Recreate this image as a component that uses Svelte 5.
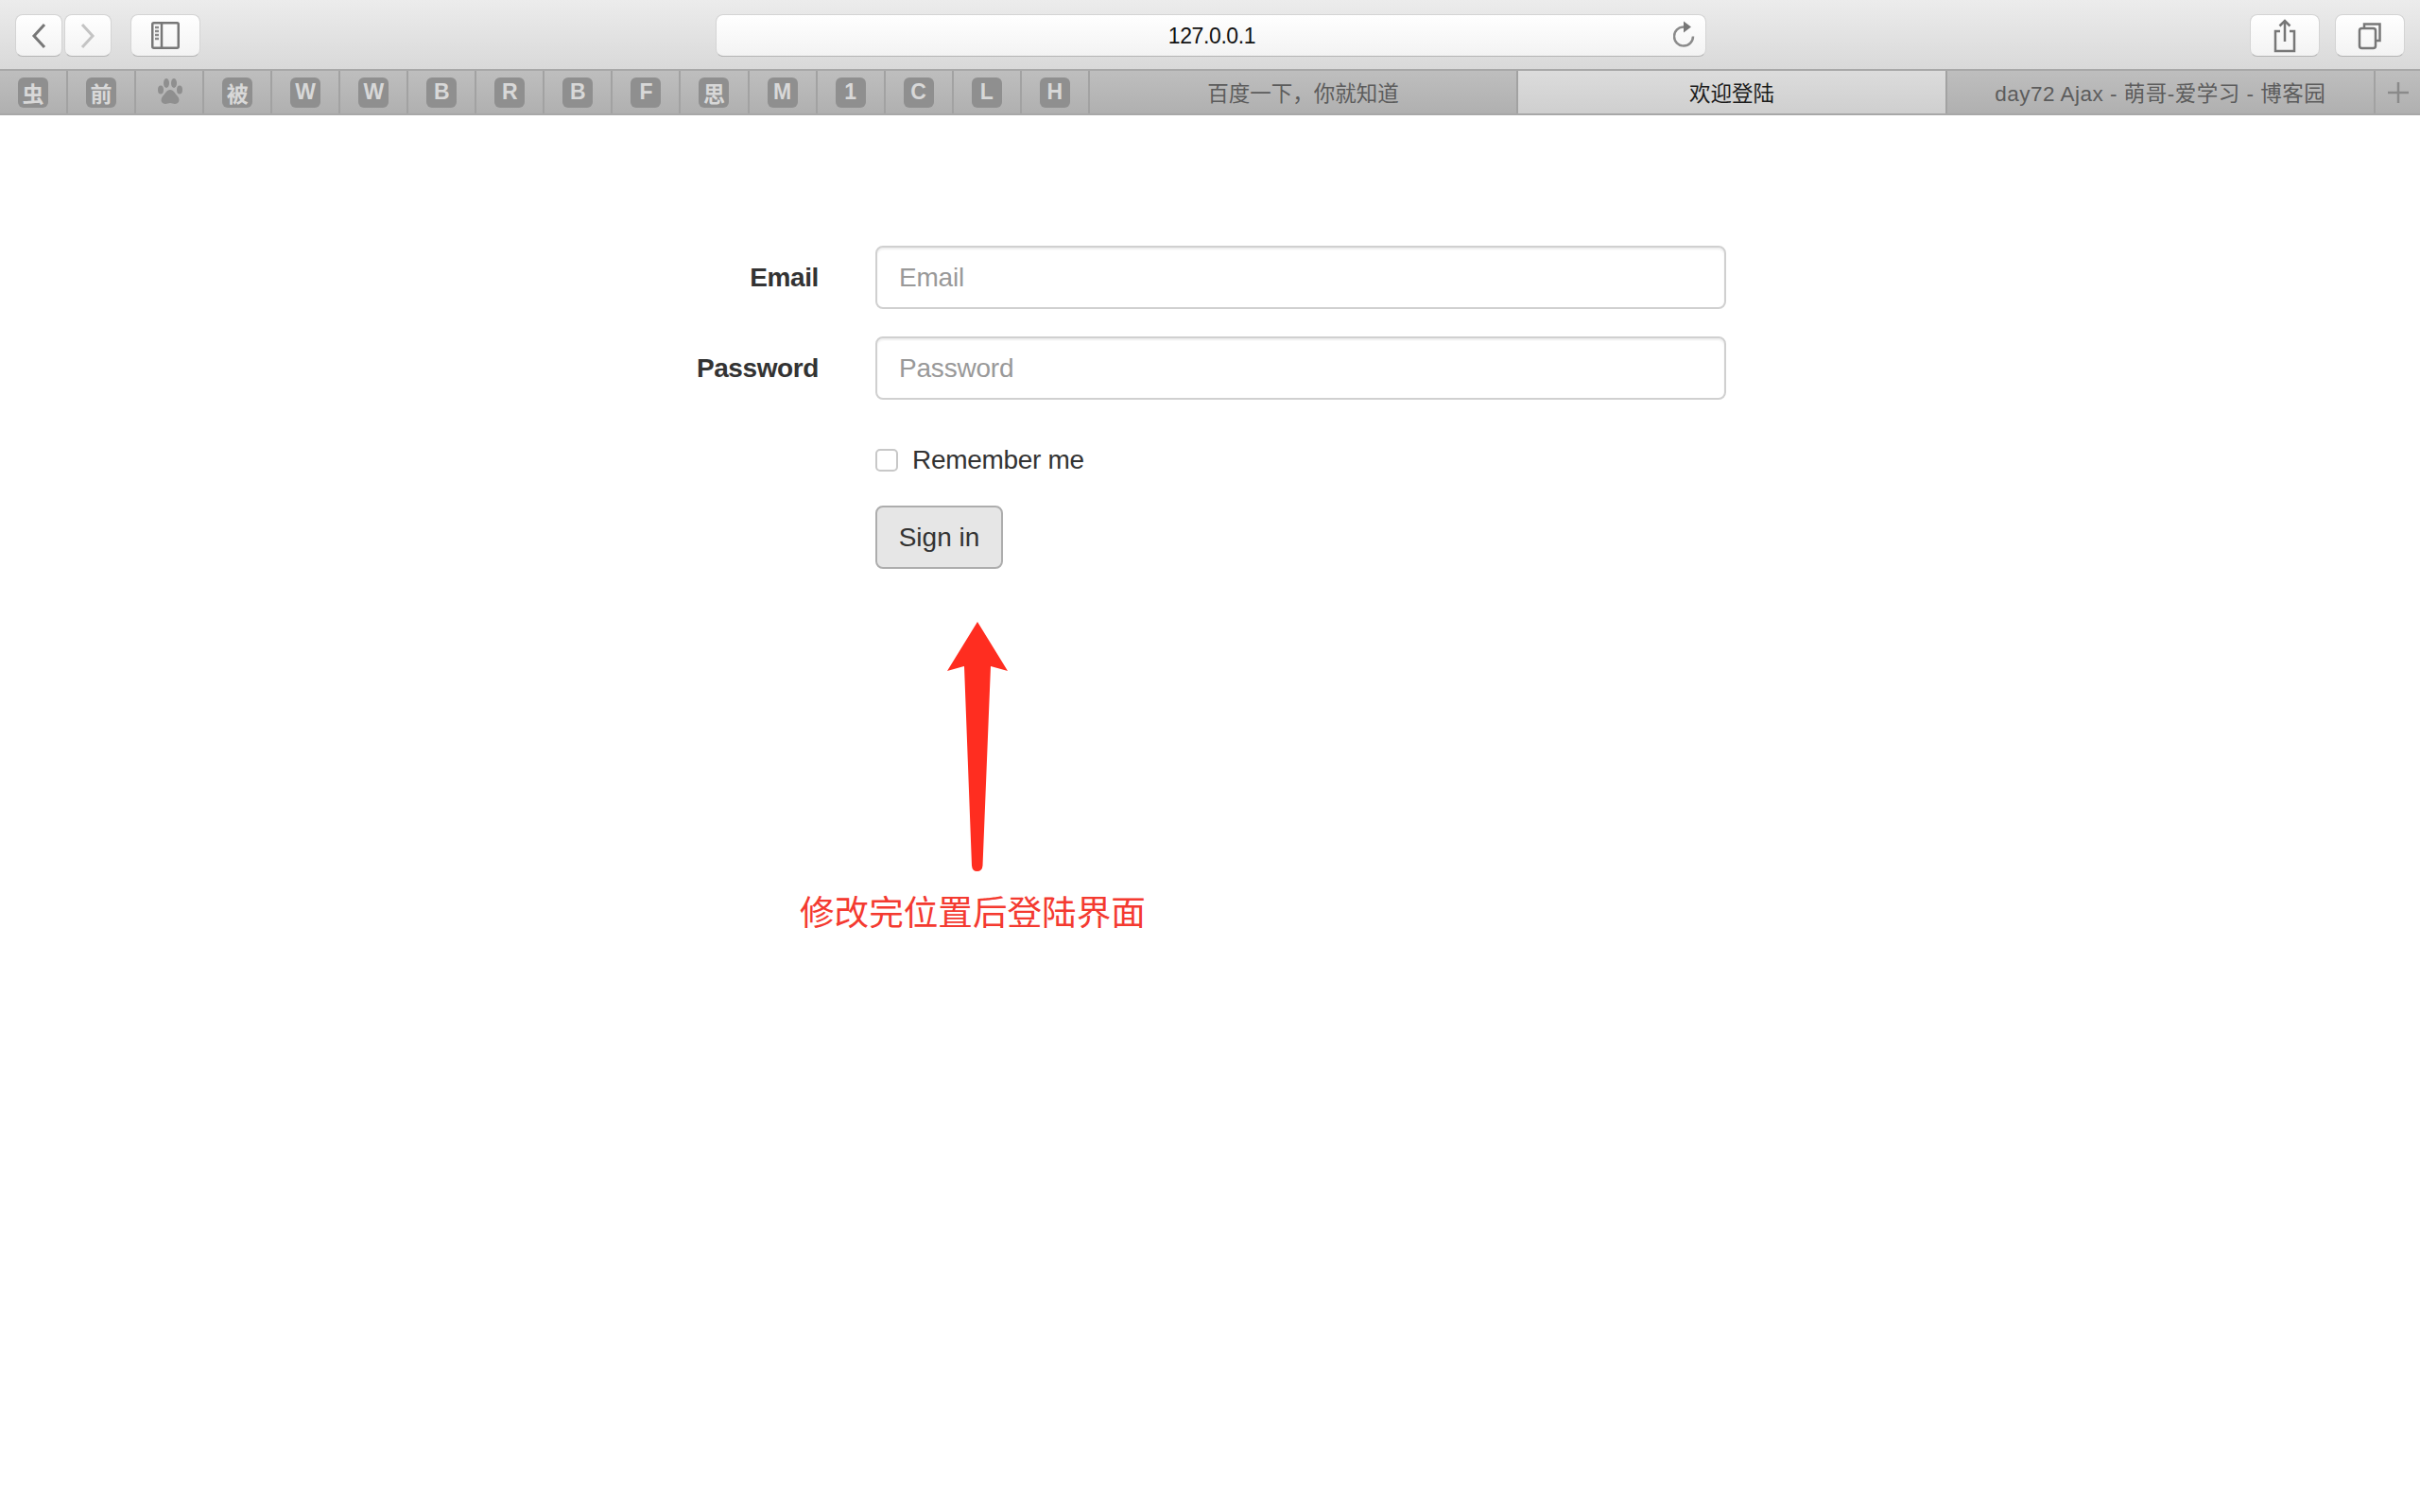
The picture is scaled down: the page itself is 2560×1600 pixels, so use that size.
<script>
	const favs = ['虫', '前', 'paw', '被', 'W', 'W', 'B', 'R', 'B', 'F', '思', 'M', '1', 'C', 'L', 'H'];
	const tabs = [
		{ title: '百度一下，你就知道', active: false, latin: false },
		{ title: '欢迎登陆', active: true, latin: false },
		{ title: 'day72 Ajax - 萌哥-爱学习 - 博客园', active: false, latin: true }
	];
</script>

<div class="toolbar">
	<div class="group">
		<button class="tool narrow" aria-label="Back">
			<svg width="16" height="28" viewBox="0 0 16 28"><path d="M14 2 3 14l11 12" class="stroke dark" /></svg>
		</button>
		<button class="tool narrow" aria-label="Forward">
			<svg width="16" height="28" viewBox="0 0 16 28"><path d="M2 2l11 12L2 26" class="stroke light" /></svg>
		</button>
		<button class="tool wide sidebar" aria-label="Sidebar">
			<svg width="30" height="30" viewBox="0 0 30 30">
				<rect x="1.25" y="1.25" width="27.5" height="26.5" rx="1.5" class="stroke dark thin" />
				<path d="M11 1v27" class="stroke dark thin" />
				<path d="M4 6h4M4 10h4M4 14h4M4 18h4" class="stroke mid thin" />
			</svg>
		</button>
	</div>

	<div class="address">
		<span class="url">127.0.0.1</span>
		<svg class="reload" width="24" height="32" viewBox="0 0 24 32">
			<path d="M11 7.500A10 10 0 1 0 21 17.500" class="stroke mid thin" />
			<path d="M11 1.500l8 6-8 6z" fill="#777" />
		</svg>
	</div>

	<div class="group right">
		<button class="tool wide" aria-label="Share">
			<svg width="24" height="36" viewBox="0 0 24 36">
				<path d="M7 13H2v21h20V13h-5M12 24V2M6.500 7.500 12 2l5.500 5.500" class="stroke dark thin" />
			</svg>
		</button>
		<button class="tool wide" aria-label="Tabs">
			<svg width="26" height="30" viewBox="0 0 26 30">
				<path d="M7 6V2.500h16.500V20H19" class="stroke dark thin" />
				<rect x="2" y="7" width="17" height="21" rx="2.500" class="stroke dark thin" />
			</svg>
		</button>
	</div>
</div>

<div class="tabbar">
	{#each favs as fav}
		<div class="fav">
			{#if fav === 'paw'}
				<svg class="paw" width="26" height="32" viewBox="0 0 26 32" fill="#8f8f8f">
					<ellipse cx="9" cy="6" rx="3" ry="5" />
					<ellipse cx="17" cy="6" rx="3" ry="5" />
					<ellipse cx="3" cy="13" rx="3" ry="4.500" />
					<ellipse cx="23" cy="13" rx="3" ry="4.500" />
					<path d="M13 13c4 0 5 4 8 7 3 4 1 8-3 8-2 0-3-1-5-1s-3 1-5 1c-4 0-6-4-3-8 3-3 4-7 8-7z" />
				</svg>
			{:else}
				<span class="badge">{fav}</span>
			{/if}
		</div>
	{/each}
	{#each tabs as tab}
		<div class="tab" class:active={tab.active} class:latin={tab.latin}><span class="title">{tab.title}</span></div>
	{/each}
	<div class="plus">
		<svg width="22" height="22" viewBox="0 0 22 22"><path d="M11 0v22M0 11h22" class="stroke mid thin" /></svg>
	</div>
</div>

<main>
	<form class="form">
		<label class="label" for="email">Email</label>
		<input id="email" class="field" type="email" placeholder="Email" />

		<label class="label" for="password">Password</label>
		<input id="password" class="field" type="password" placeholder="Password" />

		<label class="remember">
			<span class="box"></span>
			<span>Remember me</span>
		</label>

		<button class="submit" type="button">Sign in</button>
	</form>
</main>

<!-- annotation drawn over the screenshot -->
<svg class="arrow" width="64" height="266" viewBox="0 0 64 266">
	<path d="M32 0 64 52 46 47 37.500 258Q37 264 31.500 264 26.500 264 26 258L18 47 0 52z" fill="#ff2d20" />
</svg>
<div class="note">修改完位置后登陆界面</div>

<style>
	:global(body) {
		background: #fff;
		font-family: "Liberation Sans", "Noto Sans CJK SC", sans-serif;
		color: #333;
	}

	button {
		font-family: inherit;
		padding: 0;
	}

	.stroke {
		fill: none;
		stroke-width: 3;
	}

	.thin {
		stroke-width: 2.500;
	}

	.dark {
		stroke: #777;
	}

	.mid {
		stroke: #8a8a8a;
	}

	.light {
		stroke: #c4c4c4;
	}

	.toolbar {
		height: 73px;
		box-sizing: border-box;
		padding: 15px 16px 0;
		display: flex;
		align-items: flex-start;
		background: linear-gradient(#ececec, #d9d9d9);
	}

	.group {
		display: flex;
		gap: 2px;
	}

	.right {
		gap: 16px;
		margin-left: auto;
	}

	.tool {
		height: 45px;
		display: flex;
		align-items: center;
		justify-content: center;
		background: linear-gradient(#fff, #f3f3f3);
		border: 1px solid #d4d4d4;
		border-bottom-color: #b4b4b4;
		border-radius: 8px;
	}

	.narrow {
		width: 50px;
	}

	.wide {
		width: 74px;
	}

	.sidebar {
		margin-left: 18px;
	}

	.address {
		position: relative;
		width: 1048px;
		height: 45px;
		margin-left: 545px;
		box-sizing: border-box;
		display: flex;
		align-items: center;
		justify-content: center;
		background: linear-gradient(#fff, #f3f3f3);
		border: 1px solid #d4d4d4;
		border-bottom-color: #b4b4b4;
		border-radius: 8px;
	}

	.url {
		font-size: 23px;
		letter-spacing: -0.4px;
		color: #111;
		padding: 2px 0 0 2px;
	}

	.reload {
		position: absolute;
		right: 10px;
		top: 5px;
	}

	.tabbar {
		height: 45px;
		display: flex;
		border-top: 2px solid #a8a8a8;
		border-bottom: 2px solid #a8a8a8;
		background: linear-gradient(#bebebe, #b0b0b0);
		font-size: 22.500px;
		color: #5c5c5c;
	}

	.fav {
		flex: 0 0 72.060px;
		box-sizing: border-box;
		display: flex;
		align-items: center;
		justify-content: center;
		border-right: 2px solid #a2a2a2;
	}

	.paw {
		margin-left: 2px;
	}

	.badge {
		width: 32px;
		height: 32px;
		display: flex;
		align-items: center;
		justify-content: center;
		background: #8f8f8f;
		border-radius: 6px;
		color: #d8d8d8;
		font-weight: 700;
		font-size: 23px;
	}

	.tab {
		flex: 1;
		box-sizing: border-box;
		display: flex;
		align-items: center;
		justify-content: center;
		border-right: 2px solid #a2a2a2;
	}

	.title {
		margin-top: -2px;
	}

	.latin {
		letter-spacing: 0.5px;
	}

	.active {
		background: linear-gradient(#dcdcdc, #cfcfcf);
		color: #1c1c1c;
	}

	.plus {
		flex: 0 0 47px;
		display: flex;
		align-items: center;
		justify-content: center;
	}

	main {
		padding-top: 138px;
	}

	.form {
		display: grid;
		grid-template-columns: 866px 900px;
		column-gap: 60px;
		row-gap: 29px;
		align-items: center;
	}

	.label {
		text-align: right;
		font-size: 28px;
		font-weight: 700;
		letter-spacing: -0.4px;
	}

	.field {
		height: 67px;
		box-sizing: border-box;
		padding: 0 23px;
		font-family: inherit;
		font-size: 28px;
		letter-spacing: -0.2px;
		color: #555;
		background: #fff;
		border: 2px solid #d0d0d0;
		border-radius: 8px;
		box-shadow: inset 0 2px 2px rgba(0, 0, 0, 0.07);
	}

	.field::placeholder {
		color: #999;
	}

	.remember {
		grid-column: 2;
		margin-top: 15px;
		display: flex;
		align-items: center;
		gap: 15px;
		font-size: 28px;
		letter-spacing: -0.3px;
		height: 39px;
	}

	.box {
		width: 24px;
		height: 24px;
		box-sizing: border-box;
		border: 2px solid #c8c8c8;
		border-radius: 5px;
		background: #fff;
	}

	.submit {
		grid-column: 2;
		justify-self: start;
		width: 135px;
		height: 67px;
		font-size: 28px;
		color: #333;
		background: #e6e6e6;
		border: 2px solid #adadad;
		border-radius: 8px;
	}

	.arrow {
		position: absolute;
		left: 1002px;
		top: 658px;
	}

	.note {
		position: absolute;
		left: 846px;
		top: 945px;
		font-size: 36.600px;
		line-height: 44px;
		color: #f43a30;
		white-space: nowrap;
	}
</style>
